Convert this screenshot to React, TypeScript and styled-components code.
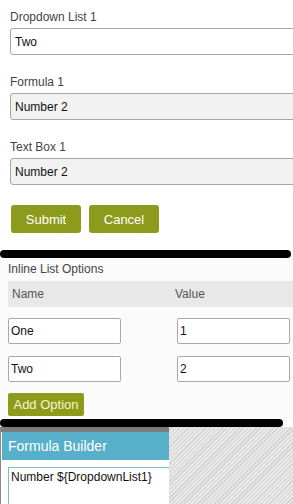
import React from 'react';
import styled, { createGlobalStyle } from 'styled-components';

const GlobalStyle = createGlobalStyle`
  html, body {
    margin: 0;
    padding: 0;
    background: #ffffff;
    overflow: hidden;
  }
  body {
    font-family: 'Liberation Sans', Arial, sans-serif;
  }
`;

const Page = styled.div`
  width: 293px;
  height: 504px;
  overflow: hidden;
  display: flex;
  flex-direction: column;
`;

// top form
const FormSection = styled.section`
  display: flex;
  flex-direction: column;
  gap: 20px;
  padding: 10px 0 17px 10px;
  background: #ffffff;
`;
const Field = styled.div`
  display: flex;
  flex-direction: column;
  gap: 4px;
`;
const Label = styled.label`
  font-size: 12px;
  line-height: 14px;
  color: #444444;
`;
const TextInput = styled.input<{ $readonly?: boolean }>`
  box-sizing: border-box;
  width: 300px;
  height: 27px;
  padding: 0 4px;
  border: 1px solid #a6a6a6;
  border-radius: 3px;
  background: ${(p) => (p.$readonly ? '#f2f2f2' : '#ffffff')};
  font-family: 'Liberation Sans', Arial, sans-serif;
  font-size: 12px;
  color: #111111;
  outline: none;
`;
const ButtonRow = styled.div`
  display: flex;
  gap: 8px;
  margin-left: 1px;
`;
const ActionButton = styled.button`
  width: 70px;
  height: 28px;
  border: none;
  border-radius: 3px;
  background: #8d9b1c;
  color: #ffffff;
  font-family: 'Liberation Sans', Arial, sans-serif;
  font-size: 13px;
  padding: 0;
`;

// black marker strokes between the cut-outs
const Stroke = styled.div<{ $width: number }>`
  height: 8px;
  width: ${(p) => p.$width}px;
  background: #000000;
  border-radius: 4px;
  flex-shrink: 0;
`;

// inline list options
const OptionsSection = styled.section`
  display: flex;
  flex-direction: column;
  padding: 4px 0 3px 8px;
  background: #fbfbfb;
`;
const SectionTitle = styled.div`
  font-size: 12px;
  line-height: 14px;
  color: #444444;
`;
const HeaderRow = styled.div`
  display: grid;
  grid-template-columns: 163px 1fr;
  align-items: center;
  height: 26px;
  margin-top: 5px;
  padding-left: 4px;
  background: #e8e8e8;
  font-size: 12px;
  color: #555555;
`;
const OptionRow = styled.div<{ $top: number }>`
  display: grid;
  grid-template-columns: 169px 113px;
  margin-top: ${(p) => p.$top}px;
`;
const OptionInput = styled.input`
  box-sizing: border-box;
  width: 113px;
  height: 26px;
  padding: 0 2px;
  border: 1px solid #a9a9a9;
  border-radius: 2px;
  background: #ffffff;
  font-family: 'Liberation Sans', Arial, sans-serif;
  font-size: 12px;
  color: #111111;
  outline: none;
`;
const AddButton = styled.button`
  align-self: flex-start;
  width: 76px;
  height: 23px;
  margin-top: 11px;
  padding: 0;
  border: none;
  border-radius: 2px;
  background: #8e9b1a;
  color: #f7f4d2;
  font-family: 'Liberation Sans', Arial, sans-serif;
  font-size: 13px;
`;

// formula builder dialog
const BottomArea = styled.section`
  display: flex;
  flex: 1;
  min-height: 0;
`;
const Dialog = styled.div`
  width: 168px;
  flex-shrink: 0;
  display: flex;
  flex-direction: column;
  border-left: 1px solid #8a8a8a;
  background: #ffffff;
  overflow: hidden;
`;
const DialogTop = styled.div`
  height: 5px;
  background: #7d7d7d;
`;
const DialogHeader = styled.div`
  height: 28px;
  margin-left: 1px;
  display: flex;
  align-items: center;
  padding-left: 6px;
  background: #58afc9;
  color: #ffffff;
  font-size: 14px;
`;
const FormulaBox = styled.div`
  flex: 1;
  margin: 7px 0 0 7px;
  padding: 2px 2px;
  border: 1px solid #79bccd;
  border-right: none;
  border-bottom: none;
  font-size: 12px;
  line-height: 14px;
  color: #111111;
  white-space: nowrap;
`;
const Hatch = styled.div`
  flex: 1;
  background: repeating-linear-gradient(
    135deg,
    #e8e8e8 0px,
    #e8e8e8 2px,
    #d2d2d2 2px,
    #d2d2d2 3px
  );
`;

const App = () => {
  return (
    <Page>
      <GlobalStyle />
      <FormSection>
        <Field>
          <Label>Dropdown List 1</Label>
          <TextInput readOnly value="Two" />
        </Field>
        <Field>
          <Label>Formula 1</Label>
          <TextInput $readonly readOnly value="Number 2" />
        </Field>
        <Field>
          <Label>Text Box 1</Label>
          <TextInput $readonly readOnly value="Number 2" />
        </Field>
        <ButtonRow>
          <ActionButton>Submit</ActionButton>
          <ActionButton>Cancel</ActionButton>
        </ButtonRow>
      </FormSection>
      <Stroke $width={291} />
      <OptionsSection>
        <SectionTitle>Inline List Options</SectionTitle>
        <HeaderRow>
          <span>Name</span>
          <span>Value</span>
        </HeaderRow>
        <OptionRow $top={11}>
          <OptionInput readOnly value="One" />
          <OptionInput readOnly value="1" />
        </OptionRow>
        <OptionRow $top={12}>
          <OptionInput readOnly value="Two" />
          <OptionInput readOnly value="2" />
        </OptionRow>
        <AddButton>Add Option</AddButton>
      </OptionsSection>
      <Stroke $width={283} />
      <BottomArea>
        <Dialog>
          <DialogTop />
          <DialogHeader>Formula Builder</DialogHeader>
          <FormulaBox>{'Number ${DropdownList1}'}</FormulaBox>
        </Dialog>
        <Hatch />
      </BottomArea>
    </Page>
  );
};

export default App;
